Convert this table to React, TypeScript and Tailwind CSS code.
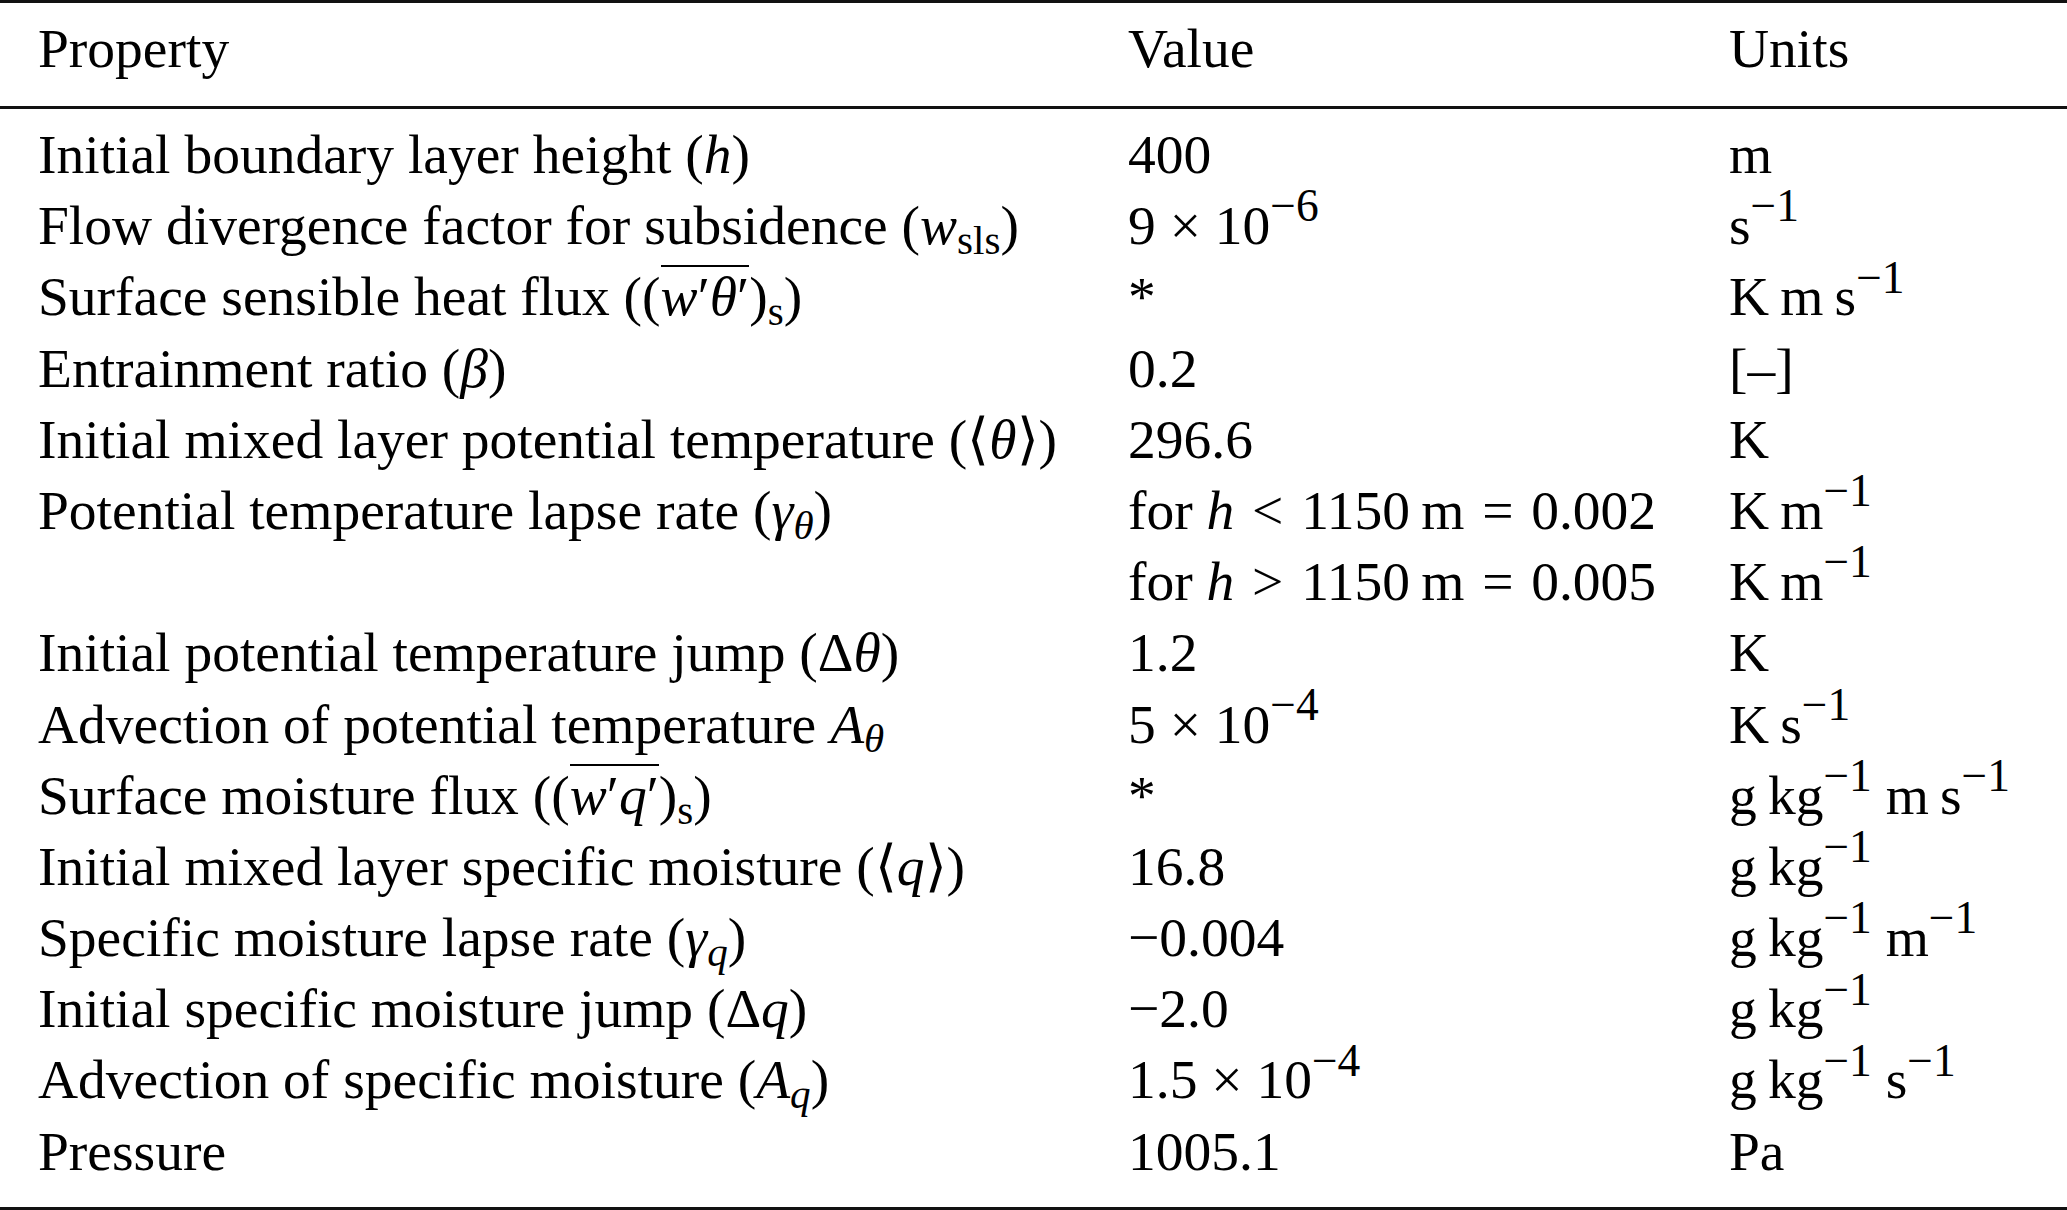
import React from "react";

type Row = {
  prop: React.ReactNode;
  value: React.ReactNode;
  units: React.ReactNode;
};

const I = ({ children }: { children: React.ReactNode }) => (
  <span className="italic">{children}</span>
);

const Sup = ({ children }: { children: React.ReactNode }) => (
  <span className="relative bottom-[0.5em] text-[0.82em] leading-none">
    {children}
  </span>
);

const Sub = ({ children }: { children: React.ReactNode }) => (
  <span className="relative top-[0.24em] text-[0.74em] leading-none">
    {children}
  </span>
);

// overline over w'θ' / w'q'
const Bar = ({ children }: { children: React.ReactNode }) => (
  <span className="inline-block border-t-[2px] border-black pt-[2px] leading-none">
    {children}
  </span>
);

// math relation space (< , =)
const Rel = () => <span className="inline-block w-[0.32em]" />;

const thin = "\u2009";

const rows: Row[] = [
  {
    prop: (
      <>
        Initial boundary layer height (<I>h</I>)
      </>
    ),
    value: "400",
    units: "m",
  },
  {
    prop: (
      <>
        Flow divergence factor for subsidence (<I>w</I>
        <Sub>sls</Sub>)
      </>
    ),
    value: (
      <>
        9 × 10<Sup>−6</Sup>
      </>
    ),
    units: (
      <>
        s<Sup>−1</Sup>
      </>
    ),
  },
  {
    prop: (
      <>
        Surface sensible heat flux ((
        <Bar>
          <I>w</I>′<I>θ</I>′
        </Bar>
        )<Sub>s</Sub>)
      </>
    ),
    value: "*",
    units: (
      <>
        K{thin}m{thin}s<Sup>−1</Sup>
      </>
    ),
  },
  {
    prop: (
      <>
        Entrainment ratio (<I>β</I>)
      </>
    ),
    value: "0.2",
    units: "[–]",
  },
  {
    prop: (
      <>
        Initial mixed layer potential temperature (⟨<I>θ</I>⟩)
      </>
    ),
    value: "296.6",
    units: "K",
  },
  {
    prop: (
      <>
        Potential temperature lapse rate (<I>γ</I>
        <Sub>
          <I>θ</I>
        </Sub>
        )
      </>
    ),
    value: (
      <>
        for <I>h</I>
        <Rel />&lt;<Rel />1150{thin}m<Rel />=<Rel />0.002
      </>
    ),
    units: (
      <>
        K{thin}m<Sup>−1</Sup>
      </>
    ),
  },
  {
    prop: "",
    value: (
      <>
        for <I>h</I>
        <Rel />&gt;<Rel />1150{thin}m<Rel />=<Rel />0.005
      </>
    ),
    units: (
      <>
        K{thin}m<Sup>−1</Sup>
      </>
    ),
  },
  {
    prop: (
      <>
        Initial potential temperature jump (Δ<I>θ</I>)
      </>
    ),
    value: "1.2",
    units: "K",
  },
  {
    prop: (
      <>
        Advection of potential temperature <I>A</I>
        <Sub>
          <I>θ</I>
        </Sub>
      </>
    ),
    value: (
      <>
        5 × 10<Sup>−4</Sup>
      </>
    ),
    units: (
      <>
        K{thin}s<Sup>−1</Sup>
      </>
    ),
  },
  {
    prop: (
      <>
        Surface moisture flux ((
        <Bar>
          <I>w</I>′<I>q</I>′
        </Bar>
        )<Sub>s</Sub>)
      </>
    ),
    value: "*",
    units: (
      <>
        g{thin}kg<Sup>−1</Sup> m{thin}s<Sup>−1</Sup>
      </>
    ),
  },
  {
    prop: (
      <>
        Initial mixed layer specific moisture (⟨<I>q</I>⟩)
      </>
    ),
    value: "16.8",
    units: (
      <>
        g{thin}kg<Sup>−1</Sup>
      </>
    ),
  },
  {
    prop: (
      <>
        Specific moisture lapse rate (<I>γ</I>
        <Sub>
          <I>q</I>
        </Sub>
        )
      </>
    ),
    value: "−0.004",
    units: (
      <>
        g{thin}kg<Sup>−1</Sup> m<Sup>−1</Sup>
      </>
    ),
  },
  {
    prop: (
      <>
        Initial specific moisture jump (Δ<I>q</I>)
      </>
    ),
    value: "−2.0",
    units: (
      <>
        g{thin}kg<Sup>−1</Sup>
      </>
    ),
  },
  {
    prop: (
      <>
        Advection of specific moisture (<I>A</I>
        <Sub>
          <I>q</I>
        </Sub>
        )
      </>
    ),
    value: (
      <>
        1.5 × 10<Sup>−4</Sup>
      </>
    ),
    units: (
      <>
        g{thin}kg<Sup>−1</Sup> s<Sup>−1</Sup>
      </>
    ),
  },
  {
    prop: "Pressure",
    value: "1005.1",
    units: "Pa",
  },
];

export default function App() {
  return (
    <div className="flex h-[1210px] w-[2067px] flex-col bg-white font-['Liberation_Serif','Times_New_Roman',serif] text-[55.5px] text-black">
      {/* top rule */}
      <div className="h-[3px] bg-[#111]" />

      {/* header */}
      <div className="grid h-[103px] grid-cols-[1090px_601px_1fr] pl-[38px] pt-[10px] leading-[71px]">
        <div>Property</div>
        <div>Value</div>
        <div>Units</div>
      </div>

      <div className="h-[3px] bg-[#111]" />

      {/* body */}
      <div className="flex flex-col pl-[38px] pt-[10px]">
        {rows.map((r, i) => (
          <div
            key={i}
            className="grid h-[71.2px] grid-cols-[1090px_601px_1fr] whitespace-nowrap leading-[71.2px]"
          >
            <div>{r.prop}</div>
            <div>{r.value}</div>
            <div>{r.units}</div>
          </div>
        ))}
      </div>

      <div className="mt-auto h-[3px] bg-[#111]" />
    </div>
  );
}
